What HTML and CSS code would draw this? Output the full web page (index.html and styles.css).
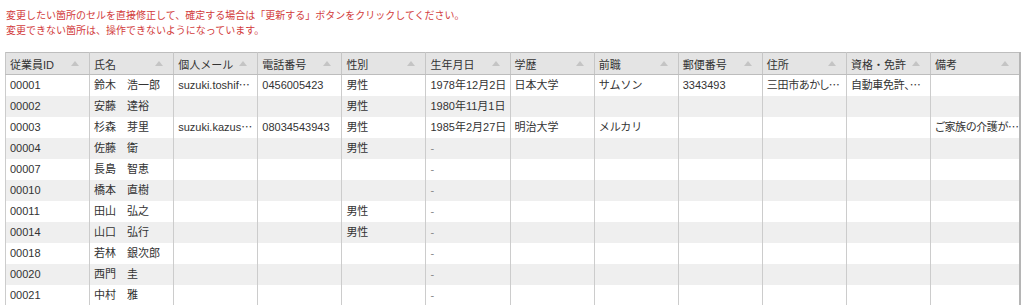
FILE: index.html
```html
<!DOCTYPE html>
<html lang="ja">
<head>
<meta charset="utf-8">
<link rel="stylesheet" href="styles.css">
</head>
<body>
<div class="notice">
  <p>変更したい箇所のセルを直接修正して、確定する場合は「更新する」ボタンをクリックしてください。</p>
  <p>変更できない箇所は、操作できないようになっています。</p>
</div>
<table class="grid">
  <colgroup>
    <col class="c"><col class="c"><col class="c"><col class="c"><col class="c"><col class="c">
    <col class="c"><col class="c"><col class="c"><col class="c"><col class="c"><col>
  </colgroup>
  <thead>
    <tr>
      <th><div class="th"><span>従業員ID</span><svg class="sort" viewBox="0 0 8 5"><path d="M0 5L4 0L8 5Z"/></svg></div></th>
      <th><div class="th"><span>氏名</span><svg class="sort" viewBox="0 0 8 5"><path d="M0 5L4 0L8 5Z"/></svg></div></th>
      <th><div class="th"><span>個人メール</span><svg class="sort" viewBox="0 0 8 5"><path d="M0 5L4 0L8 5Z"/></svg></div></th>
      <th><div class="th"><span>電話番号</span><svg class="sort" viewBox="0 0 8 5"><path d="M0 5L4 0L8 5Z"/></svg></div></th>
      <th><div class="th"><span>性別</span><svg class="sort" viewBox="0 0 8 5"><path d="M0 5L4 0L8 5Z"/></svg></div></th>
      <th><div class="th"><span>生年月日</span><svg class="sort" viewBox="0 0 8 5"><path d="M0 5L4 0L8 5Z"/></svg></div></th>
      <th><div class="th"><span>学歴</span><svg class="sort" viewBox="0 0 8 5"><path d="M0 5L4 0L8 5Z"/></svg></div></th>
      <th><div class="th"><span>前職</span><svg class="sort" viewBox="0 0 8 5"><path d="M0 5L4 0L8 5Z"/></svg></div></th>
      <th><div class="th"><span>郵便番号</span><svg class="sort" viewBox="0 0 8 5"><path d="M0 5L4 0L8 5Z"/></svg></div></th>
      <th><div class="th"><span>住所</span><svg class="sort" viewBox="0 0 8 5"><path d="M0 5L4 0L8 5Z"/></svg></div></th>
      <th><div class="th"><span>資格・免許</span><svg class="sort" viewBox="0 0 8 5"><path d="M0 5L4 0L8 5Z"/></svg></div></th>
      <th><div class="th"><span>備考</span><svg class="sort" viewBox="0 0 8 5"><path d="M0 5L4 0L8 5Z"/></svg></div></th>
    </tr>
  </thead>
  <tbody>
    <tr><td>00001</td><td>鈴木　浩一郎</td><td>suzuki.toshif⋯</td><td>0456005423</td><td>男性</td><td>1978年12月2日</td><td>日本大学</td><td>サムソン</td><td>3343493</td><td class="tight">三田市あかし⋯</td><td class="tight">自動車免許、⋯</td><td></td></tr>
    <tr><td>00002</td><td>安藤　達裕</td><td></td><td></td><td>男性</td><td>1980年11月1日</td><td></td><td></td><td></td><td></td><td></td><td></td></tr>
    <tr><td>00003</td><td>杉森　芽里</td><td>suzuki.kazus⋯</td><td>08034543943</td><td>男性</td><td>1985年2月27日</td><td>明治大学</td><td>メルカリ</td><td></td><td></td><td></td><td class="tight">ご家族の介護が⋯</td></tr>
    <tr><td>00004</td><td>佐藤　衛</td><td></td><td></td><td>男性</td><td class="dash">-</td><td></td><td></td><td></td><td></td><td></td><td></td></tr>
    <tr><td>00007</td><td>長島　智恵</td><td></td><td></td><td></td><td class="dash">-</td><td></td><td></td><td></td><td></td><td></td><td></td></tr>
    <tr><td>00010</td><td>橋本　直樹</td><td></td><td></td><td></td><td class="dash">-</td><td></td><td></td><td></td><td></td><td></td><td></td></tr>
    <tr><td>00011</td><td>田山　弘之</td><td></td><td></td><td>男性</td><td class="dash">-</td><td></td><td></td><td></td><td></td><td></td><td></td></tr>
    <tr><td>00014</td><td>山口　弘行</td><td></td><td></td><td>男性</td><td class="dash">-</td><td></td><td></td><td></td><td></td><td></td><td></td></tr>
    <tr><td>00018</td><td>若林　銀次郎</td><td></td><td></td><td></td><td class="dash">-</td><td></td><td></td><td></td><td></td><td></td><td></td></tr>
    <tr><td>00020</td><td>西門　圭</td><td></td><td></td><td></td><td class="dash">-</td><td></td><td></td><td></td><td></td><td></td><td></td></tr>
    <tr><td>00021</td><td>中村　雅</td><td></td><td></td><td></td><td class="dash">-</td><td></td><td></td><td></td><td></td><td></td><td></td></tr>
  </tbody>
</table>
</body>
</html>
```

FILE: styles.css
```css
html, body {
  margin: 0;
  padding: 0;
  background: #ffffff;
}
body {
  padding: 8px 3px 0 5px;
  font-family: "Liberation Sans", "Noto Sans CJK JP", sans-serif;
  color: #333333;
}
.notice {
  padding-left: 1px;
  margin-bottom: 14px;
}
.notice p {
  margin: 0;
  font-size: 10px;
  line-height: 15px;
  color: #d23c3c;
}
.grid {
  width: 1016px;
  table-layout: fixed;
  border-collapse: collapse;
  border: 1px solid #bdbdbd;
  border-right: 2px solid #b5b5b5;
  font-size: 11px;
}
.grid col.c {
  width: 84.1px;
}
.grid th {
  height: 21px;
  padding: 0 10px 0 4px;
  background: #e4e4e4;
  border-left: 1px solid #c6c6c6;
  border-bottom: 1px solid #bdbdbd;
  font-weight: normal;
  text-align: left;
  color: #333333;
}
.th {
  display: flex;
  align-items: center;
  justify-content: space-between;
}
.sort {
  width: 8px;
  height: 5px;
  fill: #c4c4c4;
  flex: none;
}
.grid td {
  height: 21px;
  padding: 0 1px 0 4px;
  border-left: 1px solid #cccccc;
  white-space: nowrap;
  overflow: hidden;
  text-overflow: clip;
  line-height: 21px;
}
.grid td.tight {
  font-feature-settings: "palt";
  letter-spacing: -0.3px;
}
.grid tbody tr:nth-child(even) td {
  background: #efefef;
}
.grid td.dash {
  color: #888888;
}
```
